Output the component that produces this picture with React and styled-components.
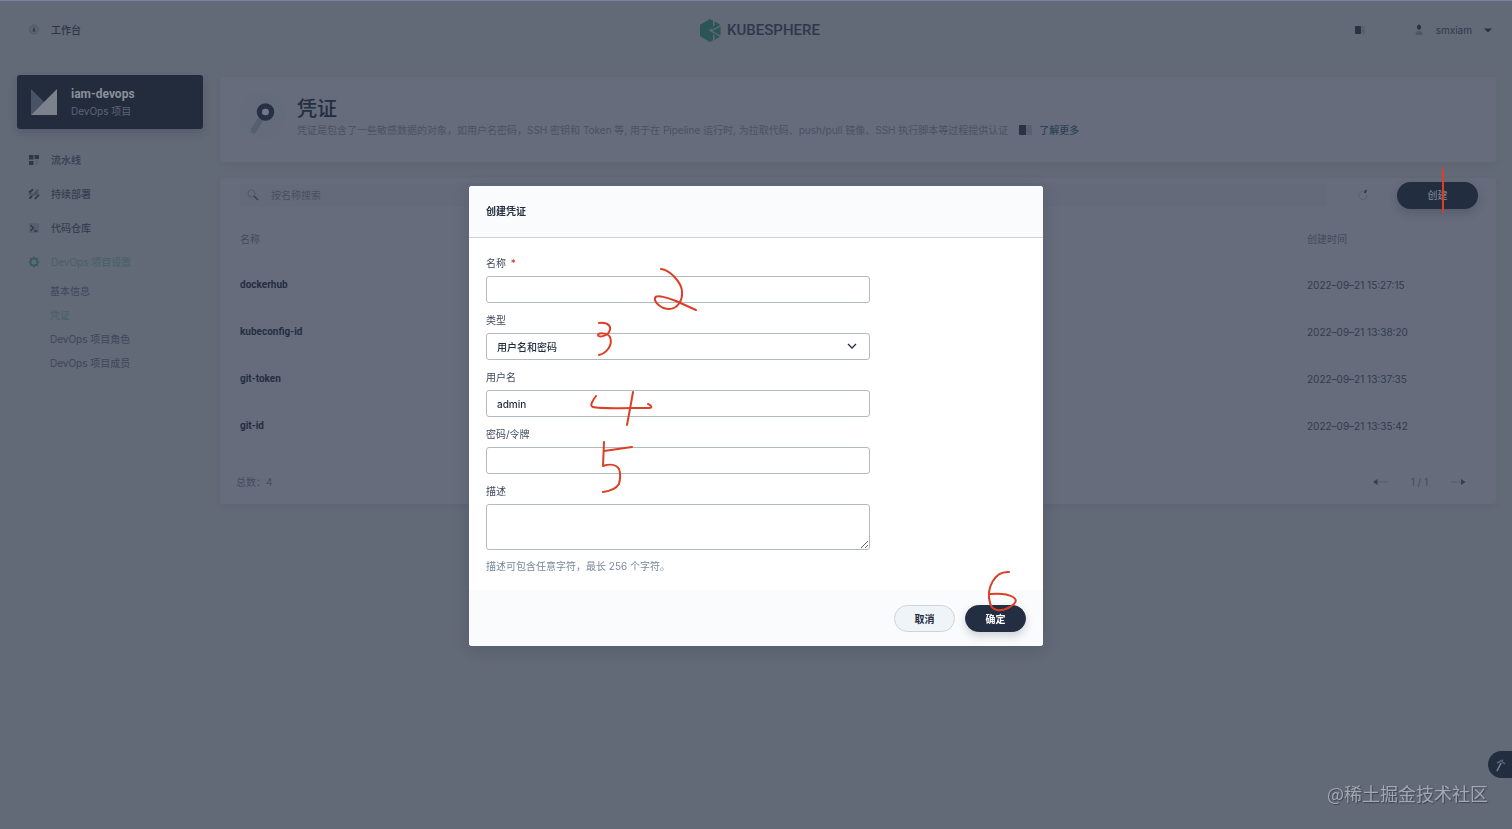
import React from 'react';
import styled, { createGlobalStyle, css } from 'styled-components';

const credentials = [
    { name: 'dockerhub', created: '2022–09–21 15:27:15' },
    { name: 'kubeconfig-id', created: '2022–09–21 13:38:20' },
    { name: 'git-token', created: '2022–09–21 13:37:35' },
    { name: 'git-id', created: '2022–09–21 13:35:42' },
];

const settings = [
    { label: '基本信息' },
    { label: '凭证', active: true },
    { label: 'DevOps 项目角色' },
    { label: 'DevOps 项目成员' },
];

function Scribble({ x, y, width, height, paths }) {
    return (
        <Mark $x={x} $y={y} width={width} height={height} viewBox={`0 0 ${width} ${height}`} aria-hidden="true">
            {paths.map((d) => <path key={d} d={d} />)}
        </Mark>
    );
}

function DocsIcon() {
    return (
        <svg width="14" height="10" viewBox="0 0 14 10" aria-hidden="true">
            <rect x="0" y="0" width="7" height="10" rx="1" fill="#2a3346" />
            <rect x="7" y="0" width="6" height="10" rx="1" fill="#566173" />
        </svg>
    );
}

function Header() {
    return (
        <TopBar>
            <TopLink href="#workbench">
                <svg width="12" height="12" viewBox="0 0 12 12" aria-hidden="true">
                    <circle cx="6" cy="5.500" r="4.500" fill="#5b6371" stroke="#535b6b" />
                    <path d="M6 2.500l1.300 5H4.700z" fill="#2e384a" />
                </svg>
                工作台
            </TopLink>
            <Brand href="#home">
                <svg width="21" height="23" viewBox="0 0 21 23" aria-hidden="true">
                    <path d="M10 0l3 1.8v6L9 11l4 3.6v6.6L10 23 0 17.2V5.8z" fill="#2c5558" />
                    <path d="M14.5 2.6L20.5 6l-8.5 4.8-1.4-.6 3.900-4z" fill="#2c5558" />
                    <path d="M20.5 7.4v9.2L12.4 12z" fill="#2c5558" />
                    <path d="M10.8 12.6l9.2 5.2-5.5 3.2v-4.6z" fill="#2c5558" />
                </svg>
                KUBESPHERE
            </Brand>
            <Account>
                <IconButton type="button" aria-label="文档">
                    <svg width="14" height="10" viewBox="0 0 14 10" aria-hidden="true">
                        <rect x="1" y="1" width="6" height="8" rx="1" fill="#293345" />
                        <rect x="7" y="1" width="4" height="8" rx="1" fill="#566071" />
                    </svg>
                </IconButton>
                <UserButton type="button">
                    <svg width="10" height="12" viewBox="0 0 10 12" aria-hidden="true">
                        <ellipse cx="5" cy="3.3" rx="2" ry="2.7" fill="#293345" />
                        <path d="M1.5 11c0-3 1.5-4 3.5-4s3.500 1 3.500 4z" fill="#4e5869" />
                    </svg>
                    smxiam
                    <svg width="8" height="5" viewBox="0 0 8 5" aria-hidden="true">
                        <path d="M0 .5h8L4 4.500z" fill="#293345" />
                    </svg>
                </UserButton>
            </Account>
        </TopBar>
    );
}

function Sidebar() {
    return (
        <Side>
            <ProjectCard>
                <svg width="26" height="26" viewBox="0 0 26 26" aria-hidden="true">
                    <path d="M0 0l13 13L0 26z" fill="#495365" />
                    <path d="M26 0v26H0z" fill="#7c818e" />
                </svg>
                <div>
                    <ProjectName>iam-devops</ProjectName>
                    <ProjectType>DevOps 项目</ProjectType>
                </div>
            </ProjectCard>
            <nav>
                <NavLink href="#pipelines">
                    <svg width="12" height="12" viewBox="0 0 12 12" aria-hidden="true">
                        <path d="M1 1h4.500v4.500H1zM1 7h4.500v4H1z" fill="#2e384a" />
                        <path d="M6.500 1H11v4H6.500z" fill="#2e384a" />
                        <path d="M7 6h3.500v4.500H7z" fill="#596272" />
                    </svg>
                    流水线
                </NavLink>
                <NavLink href="#deployments">
                    <svg width="12" height="12" viewBox="0 0 12 12" fill="none" strokeWidth="1.8" aria-hidden="true">
                        <path d="M1 4.500l4-3M7 11l4-4.500M1.500 10.500L4 8" stroke="#2e384a" />
                        <path d="M4 8l6.500-6.500M1 7l3-2M7 7l3-3" stroke="#485263" />
                    </svg>
                    持续部署
                </NavLink>
                <NavLink href="#repositories">
                    <svg width="12" height="12" viewBox="0 0 12 12" fill="none" aria-hidden="true">
                        <rect x="1" y="1" width="10" height="10" rx="1" fill="#566070" />
                        <path d="M2.500 3l3 3-3 3M6 9h3.500" stroke="#2e384a" strokeWidth="1.300" />
                    </svg>
                    代码仓库
                </NavLink>
                <NavLink href="#settings" $active>
                    <svg width="12" height="12" viewBox="0 0 12 12" fill="none" aria-hidden="true">
                        <circle cx="6" cy="6" r="3.500" stroke="#3a5a63" strokeWidth="2" />
                        <path d="M6 .5v2M6 9.500v2M.5 6h2M9.500 6h2M2 2l1.500 1.500M8.500 8.500L10 10M10 2L8.500 3.500M2 10l1.500-1.500" stroke="#3a5a63" strokeWidth="1.200" />
                    </svg>
                    DevOps 项目设置
                </NavLink>
                <SubNav>
                    {settings.map((item) => (
                        <li key={item.label}>
                            <SubLink href="#settings" $active={item.active}>{item.label}</SubLink>
                        </li>
                    ))}
                </SubNav>
            </nav>
        </Side>
    );
}

function Banner() {
    return (
        <BannerCard>
            <svg width="48" height="48" viewBox="0 0 48 48" aria-hidden="true">
                <circle cx="23" cy="24" r="23" fill="#646b7a" />
                <path d="M18 27l5 3-6 10-3 3-3-2v-3z" fill="#53606f" />
                <circle cx="25.500" cy="21" r="6" fill="none" stroke="#273145" strokeWidth="5.500" />
                <circle cx="25.500" cy="21" r="3.300" fill="#727887" />
            </svg>
            <div>
                <Title>凭证</Title>
                <Description>
                    凭证是包含了一些敏感数据的对象，如用户名密码，SSH 密钥和 Token 等, 用于在 Pipeline 运行时, 为拉取代码、push/pull 镜像、SSH 执行脚本等过程提供认证
                    <MoreLink href="#docs">
                        <DocsIcon />
                        了解更多
                    </MoreLink>
                </Description>
            </div>
        </BannerCard>
    );
}

function CredentialList() {
    return (
        <ListCard>
            <Toolbar>
                <SearchBox>
                    <svg width="12" height="12" viewBox="0 0 12 12" fill="none" aria-hidden="true">
                        <circle cx="4.500" cy="4.500" r="3.500" stroke="#505a6a" />
                        <path d="M7 7l4 4" stroke="#343e50" strokeWidth="1.500" />
                    </svg>
                    <SearchInput aria-label="按名称搜索" placeholder="按名称搜索" />
                </SearchBox>
                <IconButton type="button" aria-label="刷新">
                    <svg width="12" height="12" viewBox="0 0 12 12" fill="none" aria-hidden="true">
                        <path d="M9.800 6.500A4 4 0 1 1 6 2.500" stroke="#576071" />
                        <path d="M8 4l1-3" stroke="#293345" strokeWidth="1.800" />
                    </svg>
                </IconButton>
                <CreateButton type="button">
                    创建
                    <Scribble x={44} y={-14} width={5} height={46} paths={['M2 1v43']} />
                </CreateButton>
            </Toolbar>
            <Table>
                <thead>
                    <tr>
                        <TableHeader>名称</TableHeader>
                        <TableHeader $time>创建时间</TableHeader>
                    </tr>
                </thead>
                <tbody>
                    {credentials.map((item) => (
                        <tr key={item.name}>
                            <TableData $strong>{item.name}</TableData>
                            <TableData>{item.created}</TableData>
                        </tr>
                    ))}
                </tbody>
            </Table>
            <ListFooter>
                <span>总数：4</span>
                <Pager>
                    <IconButton type="button" aria-label="上一页">
                        <svg width="16" height="8" viewBox="0 0 16 8" aria-hidden="true">
                            <path d="M5 4h10" stroke="#555e6e" />
                            <path d="M4.500 1v6L0 4z" fill="#343e50" />
                        </svg>
                    </IconButton>
                    1 / 1
                    <IconButton type="button" aria-label="下一页">
                        <svg width="16" height="8" viewBox="0 0 16 8" aria-hidden="true">
                            <path d="M1 4h10" stroke="#555e6e" />
                            <path d="M11 1v6l4.500-3z" fill="#343e50" />
                        </svg>
                    </IconButton>
                </Pager>
            </ListFooter>
        </ListCard>
    );
}

function CreateDialog() {
    return (
        <Overlay>
            <Dialog role="dialog" aria-labelledby="dialog-title">
                <DialogHeader id="dialog-title">创建凭证</DialogHeader>
                <DialogBody>
                    <Field>
                        <Label htmlFor="name">名称 <Required>*</Required></Label>
                        <Control>
                            <Input id="name" />
                            <Scribble x={167} y={-9} width={46} height={46} paths={['M8 2C17 3 28 15 29 24C30 34 24 42 16 42C8 42 1 35 2 31C3 27 16 31 23 34L43 43']} />
                        </Control>
                    </Field>
                    <Field>
                        <Label htmlFor="type">类型</Label>
                        <Control>
                            <Select id="type">
                                <option>用户名和密码</option>
                            </Select>
                            <Chevron width="10" height="6" viewBox="0 0 10 6" fill="none" aria-hidden="true">
                                <path d="M1 1l4 4 4-4" stroke="#242e42" strokeWidth="1.300" />
                            </Chevron>
                            <Scribble x={110} y={-13} width={18} height={38} paths={['M3 3C13 2 16 7 13 12C11 16 2 18 2 15C2 12 12 13 14 17C17 25 11 33 3 35']} />
                        </Control>
                    </Field>
                    <Field>
                        <Label htmlFor="username">用户名</Label>
                        <Control>
                            <Input id="username" defaultValue="admin" />
                            <Scribble x={103} y={0} width={66} height={37} paths={['M7 6C4 10 0 16 4 17C10 19 42 18 60 18C64 18 62 15 59 14', 'M44 2C42 14 40 24 38 35']} />
                        </Control>
                    </Field>
                    <Field>
                        <Label htmlFor="password">密码/令牌</Label>
                        <Control>
                            <Input id="password" type="password" />
                            <Scribble x={115} y={-6} width={34} height={54} paths={['M3 1L2 25C8 23 15 23 18 28C20 33 19 39 18 43C15 48 9 50 2 51', 'M3 10L31 6']} />
                        </Control>
                    </Field>
                    <Field>
                        <Label htmlFor="description">描述</Label>
                        <TextArea id="description" />
                        <Hint>描述可包含任意字符，最长 256 个字符。</Hint>
                    </Field>
                </DialogBody>
                <DialogFooter>
                    <DialogButton type="button">取消</DialogButton>
                    <DialogButton type="button" $primary>
                        确定
                        <Scribble x={21} y={-37} width={32} height={44} paths={['M22 3C7 2 -1 20 3 34C5 42 13 43 21 39C29 35 31 31 26 28C21 25 14 24 3 25']} />
                    </DialogButton>
                </DialogFooter>
            </Dialog>
        </Overlay>
    );
}

function App() {
    return (
        <Page>
            <GlobalStyle />
            <Header />
            <Layout>
                <Sidebar />
                <Main>
                    <Banner />
                    <CredentialList />
                </Main>
            </Layout>
            <ToolButton type="button" aria-label="工具箱">
                <svg width="12" height="14" viewBox="0 0 12 14" fill="none" aria-hidden="true">
                    <path d="M3 12l4-8" stroke="#7b8290" strokeWidth="1.500" />
                    <path d="M3 4l4-2 4 3M7 2l2-1" stroke="#596274" strokeWidth="1.500" />
                </svg>
            </ToolButton>
            <CreateDialog />
            <Watermark>@稀土掘金技术社区</Watermark>
        </Page>
    );
}

const GlobalStyle = createGlobalStyle`
  * {
    box-sizing: border-box;
  }
  body {
    margin: 0;
    background-color: #626977;
    color: #3c4557;
    font-family: Inter, "Noto Sans CJK SC", sans-serif;
    font-size: 10px;
    line-height: 14px;
  }
  button, input, select, textarea {
    font: inherit;
    color: inherit;
  }
  a {
    color: inherit;
    text-decoration: none;
  }
`;

const Page = styled.div`
  min-height: 100vh;
  border-top: 1px solid #7b80a6;
`;

const TopBar = styled.header`
  display: grid;
  grid-template-columns: 1fr auto 1fr;
  align-items: center;
  height: 58px;
  padding: 0 20px 0 28px;
`;

const TopLink = styled.a`
  display: flex;
  align-items: center;
  gap: 11px;
  font-weight: 500;
  color: #2c3548;
`;

const Brand = styled.a`
  display: flex;
  align-items: center;
  gap: 6px;
  font-family: Roboto, sans-serif;
  font-size: 15px;
  font-weight: 500;
  line-height: 24px;
  color: #2e384b;
`;

const Account = styled.div`
  display: flex;
  align-items: center;
  justify-content: flex-end;
  gap: 46px;
`;

const IconButton = styled.button`
  display: flex;
  padding: 0;
  border: 0;
  background: none;
`;

const UserButton = styled(IconButton)`
  align-items: center;
  gap: 12px;
  color: #303a4c;
`;

const Layout = styled.div`
  display: flex;
  gap: 17px;
  padding: 16px 16px 0 17px;
`;

const Side = styled.aside`
  flex: none;
  width: 186px;
`;

const ProjectCard = styled.div`
  display: flex;
  align-items: center;
  gap: 14px;
  height: 54px;
  margin-bottom: 14px;
  padding: 0 14px;
  border-radius: 3px;
  background-color: #232c3d;
  box-shadow: 0 4px 8px rgba(36, 46, 66, 0.2);
`;

const ProjectName = styled.div`
  font-family: Roboto, sans-serif;
  font-size: 12px;
  font-weight: 700;
  line-height: 18px;
  color: #8b909b;
`;

const ProjectType = styled.div`
  line-height: 16px;
  color: #5c6575;
`;

const NavLink = styled.a`
  display: flex;
  align-items: center;
  gap: 11px;
  height: 34px;
  padding-left: 11px;
  font-weight: ${({ $active }) => ($active ? 400 : 500)};
  color: ${({ $active }) => ($active ? '#46616a' : '#353f51')};
`;

const SubNav = styled.ul`
  margin: 0;
  padding: 0 0 0 33px;
  list-style: none;
`;

const SubLink = styled.a`
  display: block;
  line-height: 24px;
  color: ${({ $active }) => ($active ? '#46616a' : '#3e4759')};
`;

const Main = styled.main`
  flex: 1;
  min-width: 0;
  padding-top: 2px;
`;

const Card = styled.section`
  border-radius: 3px;
  background-color: #666c7b;
  box-shadow: 0 3px 6px rgba(36, 46, 66, 0.06);
`;

const BannerCard = styled(Card)`
  display: flex;
  gap: 9px;
  height: 85px;
  margin-bottom: 16px;
  padding: 14px 20px;
`;

const Title = styled.h1`
  margin: 4px 0 0;
  font-size: 20px;
  font-weight: 500;
  line-height: 28px;
  color: #242e41;
`;

const Description = styled.p`
  display: flex;
  gap: 11px;
  margin: 0;
  color: #495263;
`;

const MoreLink = styled.a`
  display: inline-flex;
  align-items: center;
  gap: 6px;
  font-weight: 500;
  color: #2d4256;
`;

const ListCard = styled(Card)`
  padding-bottom: 15px;
`;

const Toolbar = styled.div`
  display: flex;
  align-items: center;
  height: 34px;
  padding: 0 18px 0 20px;
`;

const SearchBox = styled.div`
  display: flex;
  flex: 1;
  align-items: center;
  gap: 12px;
  height: 24px;
  margin-right: 30px;
  padding: 0 7px;
  border-radius: 3px;
  background-color: #646a79;
`;

const SearchInput = styled.input`
  flex: 1;
  padding: 0;
  border: 0;
  background: none;
  &::placeholder {
    color: #465061;
    opacity: 1;
  }
`;

const CreateButton = styled.button`
  position: relative;
  width: 81px;
  height: 27px;
  margin-left: 28px;
  padding: 0;
  border: 0;
  border-radius: 14px;
  background-color: #232d40;
  box-shadow: 0 4px 8px rgba(36, 46, 66, 0.25);
  color: #8b909b;
`;

const Table = styled.table`
  width: 100%;
  border-collapse: collapse;
  text-align: left;
`;

const TableHeader = styled.th`
  width: ${({ $time }) => ($time ? '189px' : 'auto')};
  height: 49px;
  padding: 4px 0 0 ${({ $time }) => ($time ? '0' : '20px')};
  font-weight: 400;
  color: #424b5d;
`;

const TableData = styled.td`
  height: 47px;
  padding: 0;
  color: #313b4e;
  ${({ $strong }) => $strong && css`
    padding-left: 20px;
    font-family: Roboto, sans-serif;
    font-weight: 700;
    color: #242e41;
  `}
`;

const ListFooter = styled.div`
  display: flex;
  align-items: flex-end;
  justify-content: space-between;
  height: 40px;
  padding: 0 30px 0 16px;
  color: #444d5f;
`;

const Pager = styled.div`
  display: flex;
  align-items: center;
  gap: 22px;
`;

const ToolButton = styled.button`
  position: fixed;
  right: 0;
  bottom: 51px;
  width: 24px;
  height: 27px;
  padding: 6px 0 0 6px;
  border: 0;
  border-radius: 14px 0 0 14px;
  background-color: #232d40;
  text-align: left;
`;

const Overlay = styled.div`
  position: fixed;
  inset: 0;
  display: flex;
  align-items: center;
  justify-content: center;
  padding-top: 3px;
`;

const Dialog = styled.section`
  width: 574px;
  max-width: 100%;
  border-radius: 3px;
  background-color: #ffffff;
  box-shadow: 0 4px 16px rgba(36, 46, 66, 0.2);
  color: #242e42;
`;

const DialogHeader = styled.h2`
  margin: 0;
  padding: 0 17px;
  border-bottom: 1px solid #ccd3db;
  border-radius: 3px 3px 0 0;
  background-color: #f9fbfd;
  font-size: 10px;
  font-weight: 700;
  line-height: 51px;
`;

const DialogBody = styled.form`
  display: flex;
  flex-direction: column;
  gap: 10px;
  padding: 18px 17px 17px;
`;

const Field = styled.div`
  display: flex;
  flex-direction: column;
  width: 384px;
  max-width: 100%;
`;

const Label = styled.label`
  margin-bottom: 6px;
  color: #404a5c;
`;

const Required = styled.span`
  margin-left: 2px;
  color: #ca2621;
`;

const Control = styled.div`
  position: relative;
  display: flex;
`;

const box = css`
  width: 100%;
  height: 27px;
  padding: 0 10px;
  border: 1px solid #b4b9c0;
  border-radius: 3px;
  background-color: #ffffff;
  font-weight: 500;
`;

const Input = styled.input`
  ${box}
`;

const Select = styled.select`
  ${box}
  appearance: none;
`;

const TextArea = styled.textarea`
  ${box}
  display: block;
  height: 46px;
  resize: vertical;
`;

const Chevron = styled.svg`
  position: absolute;
  top: 10px;
  right: 13px;
  pointer-events: none;
`;

const Hint = styled.p`
  margin: 9px 0 0;
  color: #79879c;
`;

const DialogFooter = styled.footer`
  display: flex;
  justify-content: flex-end;
  gap: 10px;
  padding: 15px 17px 14px;
  border-radius: 0 0 3px 3px;
  background-color: #f9fbfd;
`;

const DialogButton = styled.button`
  position: relative;
  width: 61px;
  height: 27px;
  padding: 0;
  border: 1px solid ${({ $primary }) => ($primary ? '#242e42' : '#ccd3db')};
  border-radius: 14px;
  background-color: ${({ $primary }) => ($primary ? '#242e42' : '#eff4f9')};
  box-shadow: ${({ $primary }) => ($primary ? '0 4px 8px rgba(36, 46, 66, 0.2)' : 'none')};
  color: ${({ $primary }) => ($primary ? '#ffffff' : '#242e42')};
  font-weight: 700;
`;

const Mark = styled.svg`
  position: absolute;
  left: ${({ $x }) => $x}px;
  top: ${({ $y }) => $y}px;
  overflow: visible;
  fill: none;
  stroke: #dc3f26;
  stroke-width: 2;
  stroke-linecap: round;
  stroke-linejoin: round;
  pointer-events: none;
`;

const Watermark = styled.div`
  position: fixed;
  right: 24px;
  bottom: 23px;
  font-family: "Noto Sans CJK SC", sans-serif;
  font-size: 18px;
  line-height: 26px;
  color: #a3a8b1;
  text-shadow: 1px 1px 1px #3c4452;
`;

export default App;
